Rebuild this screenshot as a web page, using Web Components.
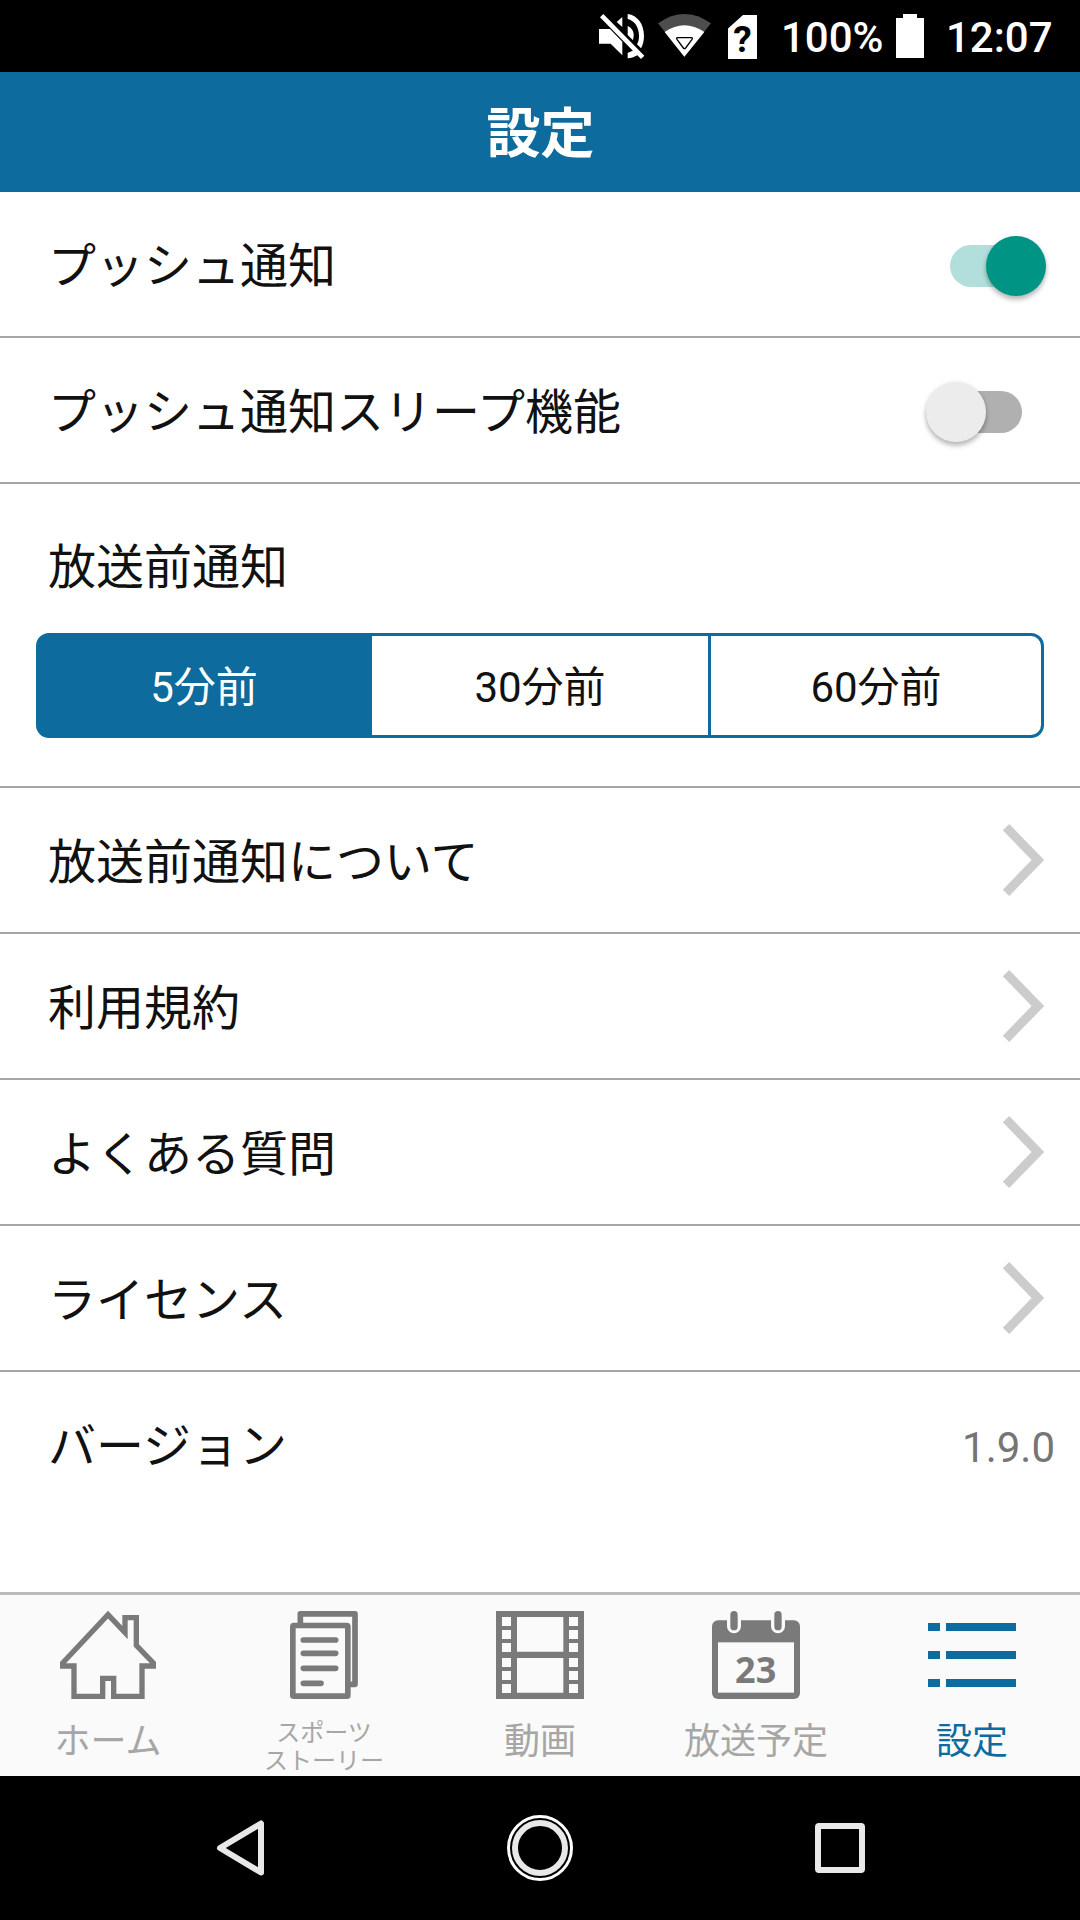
<!DOCTYPE html>
<html lang="ja">
<head>
<meta charset="utf-8">
<title>設定</title>
<style>
body{margin:0;background:#fff;font-family:Roboto,"Noto Sans CJK JP",sans-serif;color:#111;}
</style>
</head>
<body>
<settings-screen></settings-screen>

<script>
function define(name, html, setup){
    const template = document.createElement('template');
    template.innerHTML = html;

    customElements.define(name, class extends HTMLElement{
        constructor(){
            super();
            this.attachShadow({mode:'open'});
            this.shadowRoot.appendChild(template.content.cloneNode(true));
        }

        connectedCallback(){
            if(setup) setup(this, this.shadowRoot);
        }
    });
}

define('status-bar', `<style>
:host{display:flex;align-items:flex-start;justify-content:flex-end;box-sizing:border-box;height:72px;padding-right:23px;background:#000;color:#fff;font-size:42px;font-weight:500;line-height:49px;}
svg{display:block;flex:none;overflow:visible;}
span{display:block;padding-top:13px;white-space:nowrap;}
.mute{margin:14px 13px 0 0;}
.wifi{margin:14px 17px 0 0;}
.sim{margin:15px 24px 0 0;}
.level{width:115px;}
.battery{margin:14px 22px 0 0;}
.clock{width:111px;}
</style>
<svg class="mute" width="46" height="45" viewBox="27 18 138 135" fill="#fff">
<path d="M27 63H60L97 101V142L62 107H27Z"/>
<path d="M97 27V57L80 42Z"/>
<path d="M30 28L40 18L163 143L153 153Z"/>
<path d="M113 18C143 22 162 48 162 84C162 100 158 112 153 121L141 109C146 101 147 93 147 84C147 58 134 38 113 33Z"/>
<path d="M113 54C126 60 132 72 131 84L129 97L113 81Z"/>
<path d="M113 134C120 132 126 130 130 126L145 140C135 146 124 150 113 151Z"/>
</svg>
<svg class="wifi" width="53" height="43" viewBox="234 42 159 129">
<path d="M234 70Q313 14 393 70L313 170Z" fill="#4d4d4d"/>
<path d="M254 96Q313 56 373 96L313 170Z" fill="#fff"/>
<path d="M293 113H334Q339 113 336 118L317 144Q313 148 310 144L291 118Q288 113 293 113Z" fill="#fff" stroke="#000" stroke-width="4"/>
</svg>
<svg class="sim" width="29" height="44" viewBox="0 0 29 44"><path d="M15 0H29V44H0V13.5Z" fill="#fff"/><text x="14.5" y="37" text-anchor="middle" font-family="Roboto" font-size="37" font-weight="700" fill="#000">?</text></svg>
<span class="level">100%</span>
<svg class="battery" width="28" height="44" viewBox="0 0 28 44" fill="#fff"><path d="M7 0H21V4H28V44H0V4H7Z"/></svg>
<span class="clock">12:07</span>
`);

define('title-bar', `<style>
:host{display:flex;align-items:center;justify-content:center;box-sizing:border-box;height:120px;padding:6px 0 0 1px;background:#0d6b9d;color:#fff;font-size:54px;font-weight:700;line-height:60px;}
</style>
<slot></slot>
`);

define('setting-row', `<style>
:host{display:flex;align-items:center;justify-content:space-between;height:144px;padding:0 36px 0 48px;border-bottom:2px solid #a6a6a6;font-size:48px;line-height:72px;}
:host([last]){border-bottom:0;padding-right:25px;}
:host([wide]){padding-right:34px;}
:host([inset]){padding-right:58px;}
.label{padding-top:6px;}
svg{display:none;}
:host([link]) svg{display:block;}
</style>
<div class="label"><slot></slot></div>
<slot name="end"></slot>
<svg width="42" height="74" viewBox="0 0 42 74" fill="none" stroke="#ccc" stroke-width="9"><path d="M4 4.2L36 37L4 69.8"/></svg>
`);

define('toggle-switch', `<style>
:host{display:flex;align-items:center;box-sizing:border-box;width:96px;height:42px;margin-top:3px;border-radius:21px;}
i{display:block;width:60px;height:60px;border-radius:50%;background:#ececec;box-shadow:0 4px 5px rgba(0,0,0,.22),0 1px 5px rgba(0,0,0,.12);flex:none;}
/* the thumb hides the far end of the track */
:host([on]){justify-content:flex-end;background:linear-gradient(90deg,#b2dfdb 70%,transparent 70%);}
:host([on]) i{background:#009485;}
:host(:not([on])){background:linear-gradient(270deg,#b0b0b0 70%,transparent 70%);}
</style>
<i></i>
`);

define('notice-time', `<style>
:host{display:block;box-sizing:border-box;height:304px;padding:48px 36px 0;border-bottom:2px solid #a6a6a6;}
.label{padding-left:12px;font-size:48px;line-height:72px;}
.group{display:grid;grid-template-columns:333px 336px 1fr;box-sizing:border-box;height:105px;margin-top:29px;border:3px solid #0d6b9d;border-radius:13px;overflow:hidden;background:linear-gradient(90deg,#0d6b9d 100px,transparent 100px) border-box;}
</style>
<div class="label"><slot name="label"></slot></div>
<div class="group"><slot></slot></div>
`);

define('time-option', `<style>
:host{display:flex;align-items:center;justify-content:center;padding-top:5px;font-size:42px;line-height:60px;}
:host([selected]){padding-right:3px;background:#0d6b9d;color:#fff;}
:host([divided]){border-left:3px solid #0d6b9d;}
</style>
<slot></slot>
`);

define('version-text', `<style>
:host{display:block;margin-top:7px;color:#757575;font-size:42px;line-height:49px;}
</style>
<slot></slot>
`);

const icons = {
    home: `<svg width="96" height="88" viewBox="180 93 288 264" fill="none" stroke="currentColor" stroke-width="16"><path d="M324 104L375 158V113H409V196L460 249V258H426V349H341V295H308V349H222V258H188V249Z"/></svg>`,
    story: `<svg width="68" height="88" viewBox="870 93 204 264" fill="none" stroke="currentColor" stroke-width="17" stroke-linejoin="round" stroke-linecap="round">
        <path d="M901 130V101.5H1065V313H1050" />
        <rect x="878.5" y="136.5" width="165" height="212" rx="3"/>
        <path d="M910 180H1007M910 220H1007M910 265H1007M910 310H963"/></svg>`,
    movie: `<svg width="88" height="88" viewBox="228 93 264 264" fill="currentColor" fill-rule="evenodd"><path d="M228 93H492V357H228ZM291 111V215H430V111ZM291 234V338H430V234Z
        M246 111V138H273V111ZM246 150V177H273V150ZM246 189V216H273V189ZM246 234V261H273V234ZM246 273V300H273V273ZM246 312V339H273V312Z
        M447 111V138H474V111ZM447 150V177H474V150ZM447 189V216H474V189ZM447 234V261H474V234ZM447 273V300H474V273ZM447 312V339H474V312Z"/></svg>`,
    schedule: `<svg width="88" height="88" viewBox="876 93 264 264" fill="currentColor"><rect x="876" y="121" width="264" height="236" rx="18"/>
        <rect x="894" y="187" width="228" height="151" fill="#fafafa"/>
        <path d="M942 104V139M1074 104V139" fill="none" stroke="#fafafa" stroke-width="42" stroke-linecap="round"/>
        <path d="M942 104V140M1074 104V140" fill="none" stroke="currentColor" stroke-width="22" stroke-linecap="round"/>
        <text x="1007" y="308" text-anchor="middle" font-family="Open Sans" font-weight="700" font-size="108">23</text></svg>`,
    list: `<svg width="88" height="64" viewBox="0 0 88 64" fill="currentColor"><path d="M0 0H12V8H0ZM18 0H88V8H18ZM0 28H12V36H0ZM18 28H88V36H18ZM0 56H12V64H0ZM18 56H88V64H18Z"/></svg>`
};

define('tab-bar', `<style>
:host{display:grid;grid-template-columns:repeat(5,1fr);box-sizing:border-box;height:184px;border-top:3px solid #bababa;background:#fafafa;}
</style>
<slot></slot>
`);

define('tab-item', `<style>
:host{display:flex;flex-direction:column;align-items:center;padding-top:16px;color:#a6a6a6;text-align:center;font-size:36px;line-height:44px;}
.icon{display:flex;align-items:center;height:88px;margin-bottom:21px;color:#7a7a7a;}
.icon svg{display:block;}
:host([small]){font-size:24px;line-height:28px;}
:host([small]) .icon{margin-bottom:20px;}
:host([active]),:host([active]) .icon{color:#0d6b9d;}
</style>
<div class="icon"></div>
<div><slot></slot></div>
`, (el, root) => {
    root.querySelector('.icon').innerHTML = icons[el.getAttribute('icon')];
});

define('nav-bar', `<style>
:host{display:flex;align-items:center;justify-content:space-between;box-sizing:border-box;height:144px;padding:0 215px 0 216px;background:#000;}
svg{display:block;}
</style>
<svg width="48" height="56" viewBox="0 0 48 56" fill="none" stroke="#e8e8e8" stroke-width="6" stroke-linejoin="round"><path d="M45 3.5V52.5L4 28Z"/></svg>
<svg width="66" height="66" viewBox="0 0 66 66" fill="none"><circle cx="33" cy="33" r="31.5" stroke="#fff" stroke-width="3"/><circle cx="33" cy="33" r="25" stroke="#e8e8e8" stroke-width="6"/></svg>
<svg width="50" height="50" viewBox="0 0 50 50" fill="none" stroke="#e8e8e8" stroke-width="6"><rect x="3" y="3" width="44" height="44" rx="1"/></svg>
`);

define('settings-screen', `<style>
:host{display:flex;flex-direction:column;width:1080px;height:1920px;overflow:hidden;}
main{flex:1;}
</style>
<status-bar></status-bar>
<title-bar>設定</title-bar>
<main>
    <setting-row wide>プッシュ通知<toggle-switch slot="end" on></toggle-switch></setting-row>
    <setting-row inset>プッシュ通知スリープ機能<toggle-switch slot="end"></toggle-switch></setting-row>
    <notice-time>
        <span slot="label">放送前通知</span>
        <time-option selected>5分前</time-option>
        <time-option>30分前</time-option>
        <time-option divided>60分前</time-option>
    </notice-time>
    <setting-row link>放送前通知について</setting-row>
    <setting-row link>利用規約</setting-row>
    <setting-row link>よくある質問</setting-row>
    <setting-row link>ライセンス</setting-row>
    <setting-row last>バージョン<version-text slot="end">1.9.0</version-text></setting-row>
</main>
<tab-bar>
    <tab-item icon="home">ホーム</tab-item>
    <tab-item icon="story" small>スポーツ<br>ストーリー</tab-item>
    <tab-item icon="movie">動画</tab-item>
    <tab-item icon="schedule">放送予定</tab-item>
    <tab-item icon="list" active>設定</tab-item>
</tab-bar>
<nav-bar></nav-bar>
`);
</script>
</body>
</html>
